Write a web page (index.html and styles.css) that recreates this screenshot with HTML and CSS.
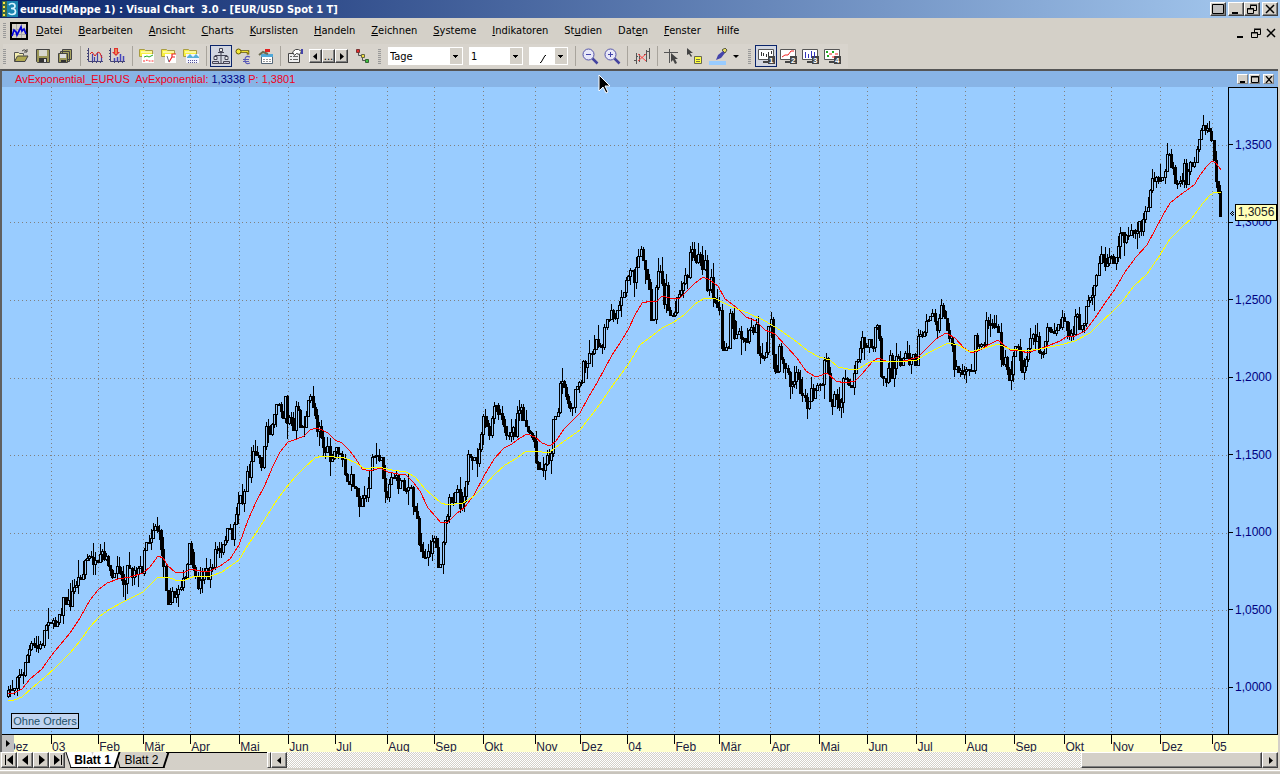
FILE: index.html
```html
<!DOCTYPE html>
<html lang="de">
<head>
    <meta charset="utf-8">
    <title>eurusd(Mappe 1) : Visual Chart 3.0</title>
    <link rel="stylesheet" href="styles.css">
</head>
<body>
<div class="window">
    <header class="titlebar">
        <svg class="app-icon" width="16" height="16" viewBox="0 0 16 16"><rect width="16" height="16" fill="#1a84b0"/><path d="M0 0h5v16H0z" fill="#3a6a48"/><path d="M2 1v14" stroke="#ffe040" stroke-width="2" stroke-dasharray="2 2"/><path d="M7 4q1-1.500 3-1.500 3 0 3 2.500t-4 2.500q4.500 0 4.500 3T10 13.500q-2 0-3.500-1.500" fill="none" stroke="#d8f4ff" stroke-width="1.700"/></svg>
        <h1>eurusd(Mappe 1) : Visual Chart&nbsp; 3.0 - [EUR/USD Spot 1 T]</h1>
        <div class="win-buttons">
            <button class="win-btn apart" aria-label="Vollbild"><svg width="12" height="10"><path d="M.5.5h11v9H.5z" fill="#c0c0c0" stroke="#000"/></svg></button>
            <button class="win-btn" aria-label="Minimieren"><svg width="10" height="10"><path d="M1 8h6v2H1z"/></svg></button>
            <button class="win-btn apart" aria-label="Wiederherstellen"><svg width="10" height="10"><use href="#restore"/></svg></button>
            <button class="win-btn" aria-label="Schließen"><svg width="10" height="10"><use href="#close"/></svg></button>
        </div>
    </header>

    <nav class="menubar">
        <span class="grip"></span>
        <svg class="doc-icon" width="18" height="18" viewBox="0 0 18 18"><path d="M1 1h16v16H1z" fill="#d4d0c8" stroke="#000" stroke-width="2"/><path d="M2 7.500h14M2 12.500h14M6.500 2v14M11.500 2v14" stroke="#aaa"/><path d="M2 14l2-6 2 2 1 3 4-8 1 4 2-2 2 5" fill="none" stroke="#0000d8" stroke-width="1.700"/></svg>
        <button><u>D</u>atei</button>
        <button><u>B</u>earbeiten</button>
        <button><u>A</u>nsicht</button>
        <button><u>C</u>harts</button>
        <button><u>K</u>urslisten</button>
        <button><u>H</u>andeln</button>
        <button><u>Z</u>eichnen</button>
        <button><u>S</u>ysteme</button>
        <button><u>I</u>ndikatoren</button>
        <button>St<u>u</u>dien</button>
        <button>Dat<u>e</u>n</button>
        <button><u>F</u>enster</button>
        <button>Hilfe</button>
        <div class="mdi-buttons">
            <button aria-label="Minimieren"><svg width="10" height="10"><path d="M1 8h6v2H1z"/></svg></button>
            <button aria-label="Wiederherstellen"><svg width="10" height="10"><use href="#restore"/></svg></button>
            <button aria-label="Schließen"><svg width="10" height="10"><use href="#close"/></svg></button>
        </div>
    </nav>

    <div class="toolbar">
        <div class="strip">
            <span class="grip"></span>
            <button class="tool" aria-label="Öffnen"><svg width="16" height="16"><path d="M1.500 13V4.500h4l1 1h4v2" fill="#f4eeb0" stroke="#555"/><path d="M1.500 13.500L4.500 8h10.500l-3 5.500z" fill="#b0a850" stroke="#444"/><path d="M9 3q2-2.500 4.500 0M14 1v3h-3" fill="none" stroke="#444"/></svg></button>
            <button class="tool" aria-label="Speichern"><svg width="16" height="16"><use href="#disk"/></svg></button>
            <button class="tool" aria-label="Alle speichern"><svg width="16" height="16"><path d="M5.500 1.500h9v10h-9zM3.500 3.500h9v10h-9z" fill="#a8a460" stroke="#444"/><path d="M1.500 5.500h9v9h-9z" fill="#9c9858" stroke="#444"/><path d="M3 6h6v4H3z" fill="#ddd"/><path d="M4 12h5v2H4z" fill="#333"/></svg></button>
            <span class="sep"></span>
            <button class="tool" aria-label="Neuer Chart"><svg width="16" height="16"><use href="#axes"/><path d="M5.500 6v7M7.500 9v4M10.500 5v8M14.500 7v6" stroke="#44a" stroke-width="1.200"/><path d="M3 6l2-2 3 4 3-4 2 1 2 5" fill="none" stroke="#d22"/></svg></button>
            <button class="tool" aria-label="Indikator einfügen"><svg width="16" height="16"><use href="#axes"/><path d="M5.500 10v3M8.500 9v4M11.500 6v7M14.500 8v5" stroke="#44b" stroke-width="1.500"/><path d="M5 0h4v4h2L7 8 3 4h2z" fill="#e03030"/><path d="M7 1v5" stroke="#ffdc70"/></svg></button>
            <span class="sep"></span>
            <button class="tool" aria-label="Chart öffnen"><svg width="16" height="16"><use href="#folder"/><path d="M3 6h12v9H3z" fill="#fff"/><path d="M5 9l3-1 2 1 4-2" fill="none" stroke="#2a2"/><path d="M4 13h2l2-1 2 1h5" fill="none" stroke="#f33" stroke-dasharray="2 1"/></svg></button>
            <button class="tool" aria-label="System öffnen"><svg width="16" height="16"><use href="#folder"/><path d="M4 6h11v9H4z" fill="#fff"/><path d="M15 6h-4v3h3M11 9L8 14" fill="none" stroke="#e22" stroke-width="1.200"/><path d="M6 8l2 6" stroke="#778"/></svg></button>
            <button class="tool" aria-label="Liste öffnen"><svg width="16" height="16"><use href="#folder"/><path d="M3 6h13v9H3z" fill="#f4f4ff"/><path d="M4 9l3-3 3 3 3-3 3 3v1H4z" fill="#58b0d8"/><path d="M5 12.500h10M5 14.500h10" stroke="#559" stroke-dasharray="1 1"/></svg></button>
            <span class="sep"></span>
            <button class="tool pressed" aria-label="Struktur"><svg width="18" height="18"><path d="M9 5v11M9 8.500H3v2M9 8.500h6v2M4 16.500h10" fill="none" stroke="#445"/><path d="M7.500 1.500h3v3h-3zM2 9.500h3v3H2zM13 9.500h3v3h-3z" fill="#eee" stroke="#445"/><path d="M6 5.500h6M.5 14.500h6v2h-6zM11.500 14.500h6v2h-6z" fill="#ccd" stroke="#445"/></svg></button>
            <button class="tool" aria-label="Schlüssel"><svg width="17" height="17"><path d="M5 3.500h8v3" fill="none" stroke="#665500" stroke-width="2.500"/><path d="M5 3.500h8v2" fill="none" stroke="#ede030"/><circle cx="3.500" cy="3.500" r="2.500" fill="#f4e838" stroke="#665a00"/><path d="M15 9q-5-2-5 3t5 3M8 11.500h6M8 13.500h6" fill="none" stroke="#5858b8" stroke-width="1.200"/></svg></button>
            <button class="tool" aria-label="Kalender"><svg width="17" height="17"><path d="M4.500 6.500h11v9h-11z" fill="#fff" stroke="#567"/><path d="M4 6h12v3H4z" fill="#50a8d8"/><path d="M6 11.500h9M6 13.500h9" stroke="#999" stroke-dasharray="2 1"/><path d="M2 7l4-3 5 2" fill="none" stroke="#6a6a50" stroke-width="2"/><path d="M8 1h5v3H8z" fill="#e02020"/></svg></button>
            <span class="sep"></span>
            <button class="tool" aria-label="Eigenschaften"><svg width="17" height="17"><path d="M1.500 5.500h11v9h-11z" fill="#eee" stroke="#444"/><path d="M3 8.500h2M6 8.500h5M3 11.500h2M6 11.500h5" stroke="#666"/><path d="M5.500 4l3-2.500h3l3 2-2 3-3-1-2 2z" fill="#fff" stroke="#444"/><path d="M14 1h2v5h-2z" fill="#44a"/></svg></button>
            <div class="stepper">
                <button aria-label="Zurück"><svg width="5" height="7"><path d="M4 0v7L0 3.500z"/></svg></button><button>...</button><button aria-label="Weiter"><svg width="5" height="7"><path d="M1 0v7l4-3.500z"/></svg></button>
            </div>
            <button class="tool" aria-label="Optimieren"><svg width="16" height="16"><path d="M4.500 5v2.500h4v5h4" fill="none" stroke="#555"/><path d="M2.500 1.500h3v3h-3z" fill="#e02828" stroke="#733"/><path d="M7.500 6.500h3v3h-3z" fill="#f0e040" stroke="#664"/><path d="M11.500 11.500h3v3h-3z" fill="#40c040" stroke="#363"/></svg></button>
        </div>
        <div class="strip">
            <span class="grip"></span>
            <span class="combo"><select class="period" aria-label="Periode"><option>Tage</option><option>Wochen</option></select></span>
            <span class="combo"><select class="count" aria-label="Anzahl"><option>1</option><option>2</option></select></span>
            <span class="combo"><select class="line" aria-label="Linie"><option>&nbsp;</option></select><svg class="line-sample" width="6" height="9"><path d="M0 8.500h1L5 1.500h1" fill="none" stroke="#000"/></svg></span>
            <span class="sep"></span>
            <button class="tool" aria-label="Verkleinern"><svg width="17" height="17"><use href="#lens"/><path d="M4 6.500h5" stroke="#44a"/></svg></button>
            <button class="tool" aria-label="Vergrößern"><svg width="17" height="17"><use href="#lens"/><path d="M4 6.500h5M6.500 4v5" stroke="#44a"/></svg></button>
            <span class="sep"></span>
            <button class="tool" aria-label="Balken löschen"><svg width="17" height="16"><path d="M2.500 5v11M0 12.500h2M2 8.500h2M5.500 6v8M12.500 2v12M15.500 0v11M10 6.500h2M13 3.500h3" stroke="#555"/><path d="M4 6l8 7M12 6l-8 7" stroke="#f44"/></svg></button>
            <span class="sep"></span>
            <button class="tool" aria-label="Fadenkreuz"><svg width="16" height="16"><path d="M5.500 1v14M0 4.500h14" stroke="#555"/><path d="M7 5v9l2-2 2 4 2-1-2-4h3z" fill="#444"/></svg></button>
            <button class="tool" aria-label="Datenfenster"><svg width="17" height="17"><path d="M1 0v7l2-1 2 3 1-1-2-3h3z" fill="#444"/><path d="M8.500 8.500h7v7h-7z" fill="#ffff40" stroke="#665"/><path d="M10 11.500h4M10 13.500h4" stroke="#774"/></svg></button>
            <button class="tool wide" aria-label="Farbe"><svg width="32" height="17"><path d="M1 13h17v4H1z" fill="#9cf"/><path d="M8 12l2-5 5-4 2 2-4 5z" fill="#44a"/><path d="M14 2l3-2 2 2-2 3z" fill="#e8e060" stroke="#554"/><path d="M25 7h6l-3 3z"/></svg></button>
        </div>
        <div class="strip">
            <span class="grip"></span>
            <button class="tool pressed" aria-label="Ansicht 1"><svg width="17" height="16"><use href="#screen"/><path d="M3.500 4v4M5.500 5v3M8.500 6v3M10.500 4v4M13.500 3v3" stroke="#333"/><text x="11" y="15">1</text></svg></button>
            <button class="tool" aria-label="Ansicht 2"><svg width="17" height="16"><use href="#screen"/><path d="M2 9l3-2h3l3-4h3" fill="none" stroke="#e22"/><text x="11" y="15">2</text></svg></button>
            <button class="tool" aria-label="Ansicht 3"><svg width="17" height="16"><use href="#screen"/><path d="M3.500 4v6M6.500 6v4M9.500 3v7M12.500 4v6" stroke="#33b"/><text x="11" y="15">3</text></svg></button>
            <button class="tool" aria-label="Ansicht 4"><svg width="17" height="16"><use href="#screen"/><path d="M2 4h3M8 4h3M3 8h3" stroke="#2a2" stroke-width="2" stroke-dasharray="2 1"/><path d="M5 6h3M11 6h3M8 9h3" stroke="#e22"/><text x="11" y="15">4</text></svg></button>
        </div>
    </div>

    <main class="chart-window">
        <div class="chart-head">
            <p>AvExponential_EURUS&nbsp; AvExponential: <b>1,3338</b> P: 1,3801</p>
            <div class="chart-buttons">
                <button aria-label="Minimieren"><svg width="8" height="7"><path d="M1 5h5v2H1z"/></svg></button>
                <button aria-label="Maximieren"><svg width="8" height="7"><path d="M.5.5h7v6h-7zM0 1h8" fill="none" stroke="#000"/></svg></button>
                <button class="last" aria-label="Schließen"><svg width="8" height="7"><path d="M1 0l6 7M7 0L1 7" stroke="#000" stroke-width="1.300"/></svg></button>
            </div>
        </div>
        <div class="chart-body">
            <div class="plot">
                <svg id="chart" viewBox="2 87 1226 647" preserveAspectRatio="none" role="img" aria-label="EUR/USD Spot"></svg>
                <button class="orders">Ohne Orders</button>
            </div>
            <div class="price-axis">
                <span>1,3500</span>
                <span>1,3000</span>
                <span>1,2500</span>
                <span>1,2000</span>
                <span>1,1500</span>
                <span>1,1000</span>
                <span>1,0500</span>
                <span>1,0000</span>
                <svg class="marker" width="4" height="5"><path d="M2 0h1v1H2zM1 1h1v1H1zM3 1h1v1H3zM0 2h1v1H0zM2 2h1v1H2zM1 3h1v1H1zM3 3h1v1H3zM2 4h1v1H2z"/></svg>
                <output class="last-price">1,3056</output>
            </div>
        </div>
        <div class="time-axis" id="months">
            <button class="axis-btn" aria-label="Zeitachse"><svg width="5" height="7"><path d="M0 0v7l4-3.500z"/></svg></button>
        </div>
    </main>

    <footer class="sheets">
        <button class="nav" aria-label="Erstes Blatt"><svg width="9" height="10"><path d="M0 0h1v10H0zM8 0v10L2 5z"/></svg></button>
        <button class="nav" aria-label="Vorheriges Blatt"><svg width="9" height="10"><path d="M7 0v10L1 5z"/></svg></button>
        <button class="nav" aria-label="Nächstes Blatt"><svg width="9" height="10"><path d="M2 0v10l6-5z"/></svg></button>
        <button class="nav" aria-label="Letztes Blatt"><svg width="9" height="10"><path d="M8 0h1v10H8zM1 0v10l6-5z"/></svg></button>
        <div class="tabs">
            <button class="tab active">Blatt 1</button>
            <button class="tab">Blatt 2</button>
        </div>
        <span class="splitter"></span>
        <button class="nav scroll" aria-label="Nach links"><svg width="5" height="7"><path d="M4 0v7L0 3.500z"/></svg></button>
        <div class="track"><div class="thumb"></div></div>
        <button class="nav scroll" aria-label="Nach rechts"><svg width="5" height="7"><path d="M1 0v7l4-3.500z"/></svg></button>
    </footer>
    <div class="status"></div>
    <svg class="cursor" width="13" height="20"><path d="M1 1v16l4-4 3 6 2-1-3-6h5z" stroke="#fff"/></svg>
</div>

<svg class="defs">
    <symbol id="restore"><path d="M3.500 5V1.500h6v5H7M3 1h7" fill="none" stroke="#000"/><path d="M.5 4.500h6v5h-6zM0 5h7" fill="none" stroke="#000"/></symbol>
    <symbol id="close"><path d="M1 1l8 8M9 1L1 9" stroke="#000" stroke-width="1.500"/></symbol>
    <symbol id="disk"><path d="M1.500 1.500h13v13h-12l-1-1z" fill="#9c9858" stroke="#444"/><path d="M4 2h8v6H4z" fill="#d8d8d0"/><path d="M4 10h8v4H4z" fill="#333"/><path d="M9 11h2v3H9z" fill="#ddd"/></symbol>
    <symbol id="axes"><path d="M1.500 0v13.500H16M0 2.500h2M0 5.500h2M0 8.500h2M0 11.500h2M5.500 13v2M9.500 13v2M13.500 13v2" fill="none" stroke="#447"/></symbol>
    <symbol id="folder"><path d="M.5 8.500v-7h5l1 1h7v6z" fill="#f8f040" stroke="#a89c40"/><path d="M2 4h11" stroke="#fff"/></symbol>
    <symbol id="lens"><circle cx="6.500" cy="6.500" r="5.500" fill="#e8e8f8" stroke="#5555aa"/><path d="M10.500 10.500l5 5" stroke="#4444a0" stroke-width="2.500"/></symbol>
    <symbol id="screen"><path d="M.5 1.500h15v10H.5z" fill="#fff" stroke="#555"/><path d="M5 14h5" stroke="#444" stroke-width="2"/><path d="M10 8h7v8h-7z" fill="#444"/></symbol>
</svg>
<script src="chart.js"></script>
</body>
</html>
```

FILE: styles.css
```css
* {
    margin: 0;
    padding: 0;
    box-sizing: border-box;
}
body {
    background: #d4d0c8;
    font-family: "DejaVu Sans Condensed", Tahoma, sans-serif;
    font-size: 11px;
    color: #000;
}
button {
    font: inherit;
    color: inherit;
    background: none;
    border: none;
}
svg {
    display: block;
    flex: none;
}
.defs {
    position: absolute;
    width: 0;
    height: 0;
}
.window {
    position: relative;
    display: flex;
    flex-direction: column;
    height: 100vh;
    overflow: hidden;
}

/* title bar */
.titlebar {
    display: flex;
    align-items: center;
    height: 18px;
    padding: 0 2px;
    background: linear-gradient(to right, #0a246a, #a6caf0);
    color: #fff;
}
.titlebar h1 {
    flex: 1;
    margin-left: 2px;
    font-size: 11px;
    white-space: nowrap;
}
.win-buttons {
    display: flex;
}
.win-btn,
.chart-buttons button,
.stepper button,
.nav,
.thumb {
    display: flex;
    align-items: center;
    justify-content: center;
    background: #d4d0c8;
    border: 1px solid;
    border-color: #fff #404040 #404040 #fff;
    box-shadow: inset -1px -1px #808080;
}
.win-btn {
    width: 16px;
    height: 14px;
}
.win-btn.apart {
    margin-right: 2px;
}

/* menu */
.menubar {
    display: flex;
    align-items: center;
    height: 25px;
    padding: 0 4px 0 3px;
}
.menubar > button {
    padding: 0 8px;
    line-height: 20px;
    white-space: nowrap;
}
.doc-icon {
    margin-left: 4px;
}
.mdi-buttons {
    display: flex;
    gap: 5px;
    margin-left: auto;
    padding-top: 5px;
}
.grip {
    flex: none;
    width: 3px;
    height: 15px;
    background: repeating-linear-gradient(#999 0 1px, #d4d0c8 1px 2px);
}

/* toolbar */
.toolbar {
    display: flex;
    height: 26px;
    padding: 1px 0 1px 3px;
}
.strip {
    display: flex;
    align-items: center;
    padding-right: 5px;
    background: #d8d4cd;
}
.strip .grip {
    margin-right: 4px;
}
.tool {
    display: flex;
    flex: none;
    align-items: center;
    justify-content: center;
    width: 22px;
    height: 22px;
}
.tool.wide {
    width: 38px;
}
.tool.pressed {
    background: #d2d6e0;
    border: 1px solid #0a246a;
}
.tool text {
    font: bold 8px "Liberation Sans", sans-serif;
    fill: #fff;
}
.sep {
    flex: none;
    width: 1px;
    height: 20px;
    margin: 0 3px 0 4px;
    background: #a8a49c;
}
.stepper {
    display: flex;
    margin: 0 3px;
}
.stepper button {
    width: 13px;
    height: 14px;
}
.combo {
    position: relative;
    height: 18px;
    margin: 0 3px;
}
.combo::after {
    content: "";
    position: absolute;
    top: 1px;
    right: 1px;
    width: 12px;
    height: 16px;
    background: linear-gradient(#000, #000) 3px 7px / 5px 1px no-repeat,
        linear-gradient(#000, #000) 4px 8px / 3px 1px no-repeat,
        linear-gradient(#000, #000) 5px 9px / 1px 1px no-repeat, #d4d0c8;
    pointer-events: none;
}
.combo select {
    appearance: none;
    display: block;
    height: 18px;
    padding-left: 2px;
    background: #fff;
    border: none;
    border-radius: 0;
    font: inherit;
}
.period { width: 75px; }
.count { width: 54px; }
.line { width: 39px; }
.line-sample {
    position: absolute;
    top: 7px;
    left: 11px;
}

/* chart */
.chart-window {
    display: flex;
    flex: 1;
    flex-direction: column;
    min-height: 0;
    margin-right: 2px;
    border-top: 2px solid #555;
    border-left: 2px solid #606060;
    background: #9cf;
}
.chart-head {
    display: flex;
    align-items: center;
    justify-content: space-between;
    height: 16px;
    padding: 0 4px 0 13px;
    background: #88b4e6;
    font: 11px "Liberation Sans", Arial, sans-serif;
    color: #f00020;
}
.chart-head p {
    white-space: nowrap;
}
.chart-head b {
    font-weight: normal;
    color: #000080;
}
.chart-buttons {
    display: flex;
    gap: 1px;
}
.chart-buttons button {
    width: 11px;
    height: 10px;
    box-shadow: none;
    border-color: #fff #808080 #808080 #fff;
}
.chart-buttons .last {
    margin-left: 2px;
}
.chart-body {
    display: flex;
    flex: 1;
    min-height: 0;
}
.plot {
    position: relative;
    flex: 1;
}
#chart {
    width: 100%;
    height: 100%;
    shape-rendering: crispEdges;
}
.grid {
    fill: none;
    stroke: #808080;
    stroke-dasharray: 1 3;
}
.up {
    fill: #9cf;
    stroke: #000;
}
.down {
    fill: #000;
    stroke: #000;
}
.fast {
    fill: none;
    stroke: #f00;
}
.slow {
    fill: none;
    stroke: #ff0;
}
.orders {
    position: absolute;
    left: 9px;
    bottom: 5px;
    width: 68px;
    height: 16px;
    background: #c0d4f0;
    border: 1px solid #000;
    font: 11px "Liberation Sans", Arial, sans-serif;
    color: #205068;
    white-space: nowrap;
}
.price-axis {
    position: relative;
    display: flex;
    flex-direction: column;
    width: 50px;
    padding: 18px 0 8px;
    border: 1px solid #000;
    border-bottom: none;
    font: 12px "Liberation Sans", Arial, sans-serif;
    color: #000080;
}
.price-axis span {
    display: flex;
    flex: 1;
    align-items: center;
}
.price-axis span::before {
    content: "";
    width: 4px;
    height: 1px;
    margin-right: 2px;
    background: #000;
}
.marker {
    position: absolute;
    top: 19%;
    left: 1px;
}
.last-price {
    position: absolute;
    top: 18%;
    right: 0;
    width: 42px;
    background: #ffffb8;
    border: 1px solid #000;
    color: #202020;
    line-height: 15px;
    text-align: center;
}
.time-axis {
    position: relative;
    display: flex;
    height: 18px;
    padding-left: 4px;
    border-top: 1px solid #000;
    background: #ffffce;
    font: 12px "Liberation Sans", Arial, sans-serif;
    color: #202040;
    overflow: hidden;
}
.month {
    min-width: 0;
    padding: 6px 0 0 1px;
    background: linear-gradient(#000, #000) 0 0 / 1px 9px no-repeat;
    line-height: 13px;
}
.axis-btn {
    position: absolute;
    left: 0;
    top: 0;
    display: flex;
    align-items: center;
    justify-content: center;
    width: 12px;
    height: 17px;
    background: #c0c0c0;
}

/* sheet tabs */
.sheets {
    display: flex;
    height: 16px;
    padding: 0 2px 0 1px;
}
.nav {
    flex: none;
    width: 16px;
    height: 16px;
}
.tabs {
    display: flex;
    width: 202px;
    padding-left: 3px;
}
.tab {
    position: relative;
    z-index: 0;
    width: 49px;
    line-height: 16px;
    font-family: "Liberation Sans", Arial, sans-serif;
    font-size: 12px;
    white-space: nowrap;
}
.tab.active {
    z-index: 1;
    width: 49px;
    font-weight: bold;
}
.tab::before,
.tab::after {
    content: "";
    position: absolute;
    z-index: -1;
    top: 0;
    bottom: 0;
    width: 50%;
    border-bottom: 1px solid #000;
}
.tab::before {
    left: 0;
    border-left: 1px solid #000;
    transform: skewX(18deg);
}
.tab::after {
    right: 0;
    border-right: 2px solid #000;
    transform: skewX(-18deg);
}
.tab.active::before,
.tab.active::after {
    background: #fff;
}
.tabs::after {
    content: "";
    flex: 1;
    border-top: 1px solid #000;
}
.splitter {
    width: 4px;
    border: 1px solid;
    border-color: #fff #404040 #404040 #fff;
}
.track {
    display: flex;
    flex: 1;
    justify-content: flex-end;
    background: repeating-conic-gradient(#fff 0 25%, #d4d0c8 0 50%) 0 0 / 2px 2px;
}
.thumb {
    width: 181px;
    height: 16px;
}
.status {
    height: 6px;
    border-bottom: 2px solid #c8c4bc;
    background: linear-gradient(#fff, #fff) 0 2px / 100% 1px no-repeat;
}
.cursor {
    position: absolute;
    left: 598px;
    top: 74px;
}
```

FILE: chart.js
```js
const months = [
    ['Dez', 6], ['03', 51], ['Feb', 98], ['Mär', 143], ['Apr', 190], ['Mai', 239], ['Jun', 288],
    ['Jul', 335], ['Aug', 387], ['Sep', 434], ['Okt', 483], ['Nov', 535], ['Dez', 580], ['04', 627],
    ['Feb', 674], ['Mär', 719], ['Apr', 770], ['Mai', 819], ['Jun', 867], ['Jul', 916], ['Aug', 965],
    ['Sep', 1014], ['Okt', 1064], ['Nov', 1111], ['Dez', 1160], ['05', 1212]
];
const axisEnd = 1278;
const priceLines = [145, 222, 300, 378, 455, 533, 610, 688];

// turning points of the daily close
const closes = `8,694 11,687 14,689 16,673 19,673 23,677 25,660 28,653 32,645 35,647 39,648 42,643 44,632 47,622
49,617 53,625 56,624 58,612 61,613 63,599 67,604 70,603 72,593 76,583 79,577 83,573 85,558 90,558 93,561 98,567
101,551 103,559 108,561 111,577 115,578 117,558 119,568 123,583 126,577 128,561 132,576 134,567 137,573 140,567
143,570 144,550 146,540 150,538 153,528 156,524 158,533 161,535 162,565 164,567 166,592 168,601 172,595 175,598
177,590 180,583 184,582 187,565 188,547 191,548 193,570 197,586 200,582 203,571 205,567 208,577 212,568 214,550
218,548 222,556 224,540 228,530 232,537 234,523 237,505 240,497 243,501 245,487 247,465 249,479 251,457 256,447
259,457 261,460 263,475 264,429 267,422 270,433 273,426 276,403 278,400 281,407 283,417 285,393 287,422 290,413
294,433 296,402 299,423 303,428 307,416 309,397 311,398 314,410 317,428 320,422 322,445 326,452 328,450 331,468
333,453 337,446 340,457 343,458 345,483 349,483 352,475 354,488 358,492 360,506 363,497 367,493 369,480 372,457
375,459 377,453 381,462 383,477 387,497 389,485 392,473 395,478 398,485 402,478 405,490 408,487 412,493 413,510
417,514 419,543 423,553 425,558 429,553 433,533 436,547 438,564 441,560 443,542 444,518 447,520 448,498 452,505
455,488 458,490 460,508 463,497 466,477 468,457 472,465 475,458 478,462 480,435 483,420 487,423 490,443 492,410
496,406 498,418 501,410 503,427 508,440 512,427 515,437 517,410 520,406 523,415 527,430 530,433 534,440 536,462
540,467 543,471 546,453 548,462 551,453 552,428 556,410 558,418 559,383 563,387 567,393 569,412 572,412 574,388
578,380 582,385 583,362 587,363 590,353 593,347 597,340 600,345 602,348 603,330 607,323 610,312 614,318 618,313
622,298 625,283 628,275 632,267 634,280 637,258 640,248 643,263 646,268 649,287 650,320 653,324 655,287 659,267
663,287 664,303 667,280 668,313 672,316 675,308 677,293 682,292 684,270 688,275 690,248 693,252 696,265 699,247
702,270 705,262 707,300 711,273 714,307 719,300 721,347 724,348 728,347 729,317 732,317 734,343 738,325 740,343
743,335 748,343 750,317 753,337 755,320 758,358 762,358 766,352 768,328 771,323 773,358 776,380 779,350 783,363
787,367 789,387 793,383 797,375 799,377 801,403 804,392 807,407 811,390 814,403 816,380 818,382 822,389 823,357
827,355 829,395 832,405 835,393 838,408 841,405 842,380 846,375 848,385 852,385 856,362 859,362 861,337 865,348
868,340 873,345 874,332 878,328 880,340 881,373 886,378 890,353 892,377 897,357 902,363 906,350 909,360 913,353
916,365 918,330 923,335 926,320 930,314 933,315 937,327 940,310 944,308 947,333 951,340 953,363 957,370 962,373
967,373 973,370 974,335 979,342 983,345 986,320 992,323 997,322 999,340 1001,360 1006,362 1008,382 1012,368
1014,348 1018,348 1021,370 1025,363 1028,345 1032,335 1037,340 1040,353 1044,350 1047,327 1052,337 1057,328
1062,325 1063,312 1067,333 1073,335 1076,313 1080,328 1083,323 1087,303 1092,300 1095,283 1098,270 1101,252
1104,267 1108,260 1111,253 1114,263 1118,247 1121,227 1124,238 1128,238 1132,227 1136,233 1139,218 1142,232
1144,217 1148,210 1151,180 1155,178 1159,180 1162,170 1164,182 1166,152 1169,158 1173,168 1177,188 1180,175
1182,183 1184,162 1186,183 1190,162 1195,162 1197,143 1201,127 1205,127 1208,125 1210,135 1213,150 1215,180
1218,190 1219,214 1222,215`;

const fast = `8,694 14,693 22,689 30,679 42,669 51,656 60,645 70,633 80,618 90,600 98,590 107,583 118,579 130,577
143,573 150,567 158,556 163,558 168,566 175,572 183,573 191,569 200,571 210,571 220,566 230,559 239,545 248,520
256,502 265,485 273,466 280,452 288,442 297,439 304,436 310,430 316,428 322,430 328,433 335,440 342,443 350,451
356,459 362,469 370,471 380,468 388,472 398,474 406,475 413,482 420,491 428,508 436,517 441,523 448,522 456,514
465,507 474,495 484,476 494,459 504,448 512,444 520,438 527,434 535,437 542,443 550,446 556,441 564,429 572,421
580,413 588,398 598,381 604,370 612,355 620,343 628,330 635,315 642,303 651,301 656,302 662,296 670,298 680,298
686,292 694,284 703,277 710,280 718,286 725,299 736,307 746,317 756,321 765,330 775,334 786,346 797,358 806,371
814,376 819,376 827,373 836,381 845,383 855,381 862,374 872,362 878,358 886,361 898,362 908,360 918,357 926,349
936,339 946,333 955,338 964,348 972,353 980,350 990,344 998,340 1004,345 1010,350 1022,351 1027,353 1036,350
1045,347 1060,341 1066,337 1075,336 1085,331 1095,318 1105,303 1115,289 1125,272 1136,257 1147,245 1155,230
1163,215 1170,203 1180,195 1190,188 1195,184 1200,175 1207,166 1212,161 1216,163 1221,170`;

const slow = `8,701 14,700 22,697 32,688 45,677 55,668 70,653 80,641 90,627 100,616 110,609 125,601 143,592 150,585
158,577 168,577 175,580 185,580 195,576 211,576 222,572 239,560 248,545 256,533 265,519 275,503 285,489 295,477
305,467 315,458 322,456 335,457 345,458 356,463 365,469 378,467 392,470 406,472 415,477 425,489 432,495 441,503
448,505 463,503 474,496 485,485 495,474 505,465 517,458 525,452 533,451 542,452 550,452 560,444 570,437 580,430
590,417 600,404 615,382 628,365 640,345 652,336 662,328 674,322 684,315 695,304 703,299 714,298 720,301 732,307
748,313 765,321 780,330 797,342 808,351 819,357 830,360 838,367 848,369 858,369 870,362 880,361 900,362 917,360
928,353 940,347 948,343 958,345 970,352 985,348 998,344 1010,349 1025,351 1040,349 1060,345 1075,341 1090,333
1100,323 1112,312 1122,302 1134,286 1147,274 1158,258 1170,239 1182,227 1192,218 1203,203 1210,195 1215,192
1221,192`;

const svg = document.getElementById('chart');

function draw(tag, attrs) {
    const el = document.createElementNS('http://www.w3.org/2000/svg', tag);
    for (const name in attrs) el.setAttribute(name, attrs[name]);
    svg.appendChild(el);
}

// same wicks on every load
let seed = 7;
function random() {
    seed = (seed * 16807) % 2147483647;
    return seed / 2147483647;
}

months.slice(1).forEach(([, x]) => {
    draw('path', { class: 'grid', d: `M${x + 0.5} 87V734` });
});
priceLines.forEach(y => {
    draw('path', { class: 'grid', d: `M10 ${y + 0.5}H1228` });
});

const points = closes.split(/\s+/).map(p => p.split(',').map(Number));

function closeAt(x) {
    const i = Math.max(1, points.findIndex(p => p[0] >= x));
    const [x0, y0] = points[i - 1];
    const [x1, y1] = points[i];
    return y0 + (y1 - y0) * (x - x0) / (x1 - x0);
}

let open = 696;
for (let x = 8; x <= 1222; x += 2.13) {
    const close = Math.round(closeAt(x) + (random() - 0.5) * 9);
    const top = Math.min(open, close);
    const bottom = Math.max(open, close, top + 1);
    const high = top - Math.floor(random() * random() * 18);
    const low = bottom + Math.floor(random() * random() * 18);
    const cx = Math.round(x) + 0.5;
    const cls = close < open ? 'up' : 'down';
    draw('path', { class: cls, d: `M${cx} ${high}V${low}` });
    draw('rect', { class: cls, x: cx - 1, y: top + 0.5, width: 2, height: bottom - top });
    open = close;
}

draw('polyline', { class: 'fast', points: fast });
draw('polyline', { class: 'slow', points: slow });

const axis = document.getElementById('months');
months.forEach(([name, x], i) => {
    const end = i + 1 < months.length ? months[i + 1][1] : axisEnd;
    const el = document.createElement('span');
    el.className = 'month';
    el.textContent = name;
    el.style.flex = `${end - x} 1 0`;
    axis.appendChild(el);
});
```
